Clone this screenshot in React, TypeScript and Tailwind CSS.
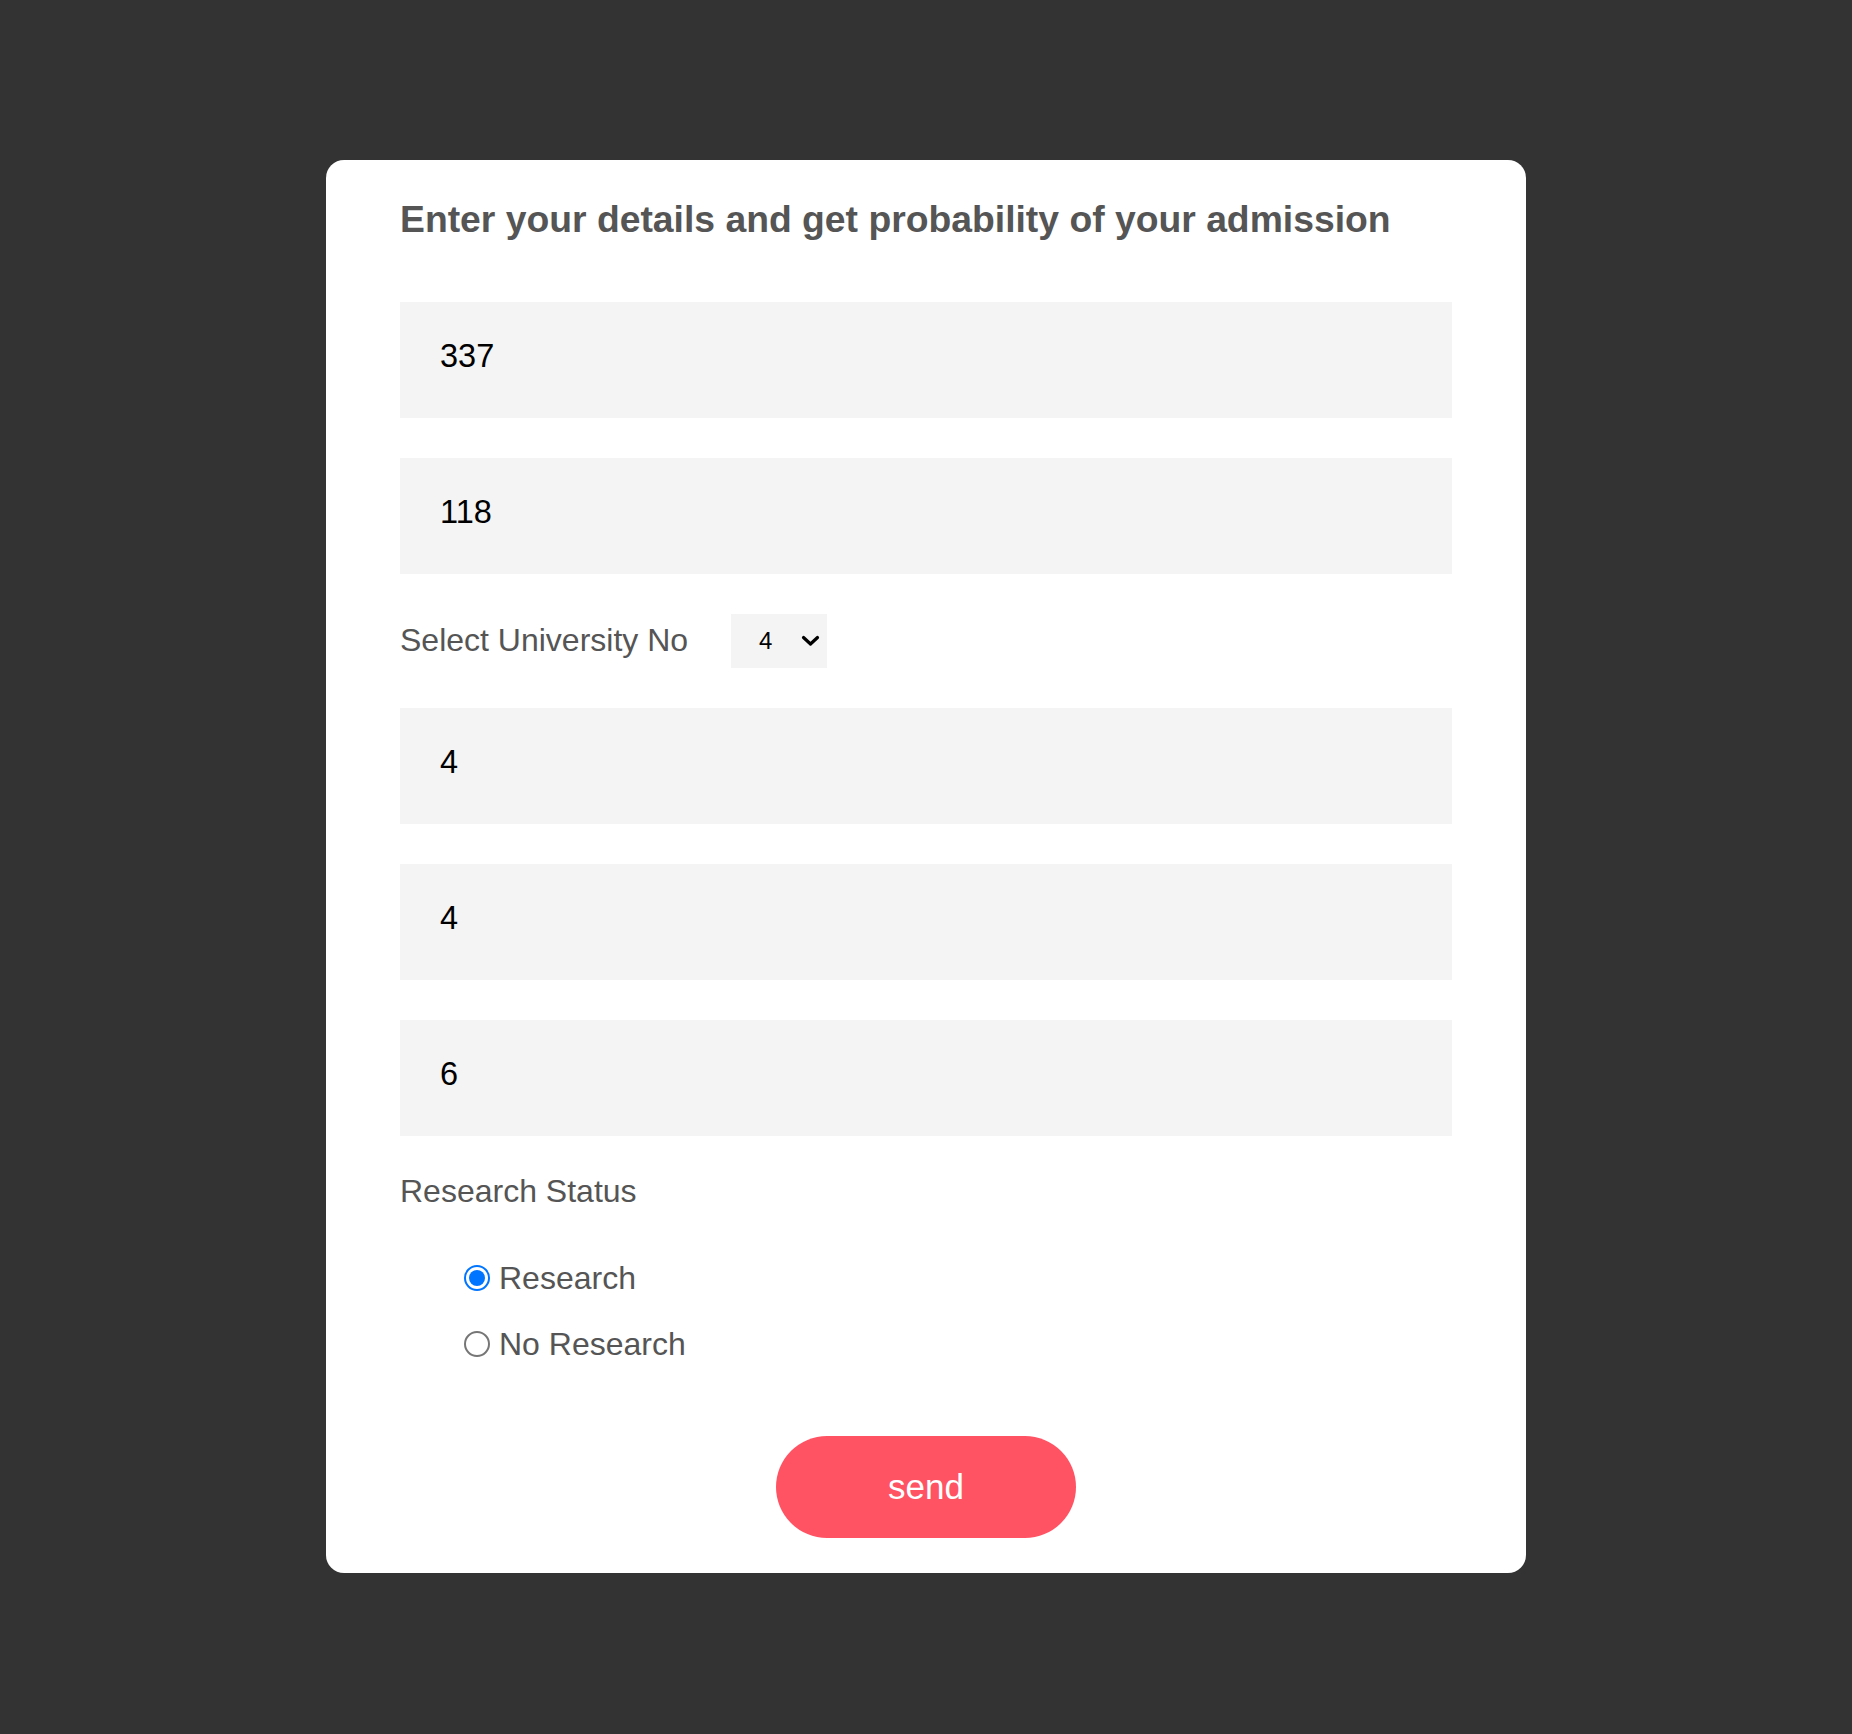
import React, { useState } from "react";

export default function App() {
  const [research, setResearch] = useState(true);
  const font = "font-['Liberation_Sans',Arial,sans-serif]";
  const inputCls =
    "w-full h-[116px] bg-[#f4f4f4] pl-[40px] pb-[7px] text-[32.5px] text-black outline-none border-0 " + font;
  return (
    <div className={"min-h-[1734px] bg-[#333333] pt-[160px] " + font}>
      <div className="w-[1200px] mx-auto bg-white rounded-[18px] px-[74px] pt-[38px] pb-[35px]">
        <h2 className="text-[37.3px] leading-[42px] font-bold text-[#555555] whitespace-nowrap">
          Enter your details and get probability of your admission
        </h2>
        <form className="mt-[62px] flex flex-col" onSubmit={(e) => e.preventDefault()}>
          <div className="flex flex-col gap-[40px]">
            <input className={inputCls} defaultValue="337" />
            <input className={inputCls} defaultValue="118" />
            <div className="flex items-center h-[54px]">
              <span className="text-[32px] leading-[37px] text-[#555555] -mt-[2px]">Select University No</span>
              <div className="relative ml-[43px] w-[96px] h-[54px] bg-[#f4f4f4]">
                <select
                  defaultValue="4"
                  className={"appearance-none w-full h-full bg-transparent pl-[28px] text-[24px] text-black outline-none border-0 " + font}
                >
                  <option value="1">1</option>
                  <option value="2">2</option>
                  <option value="3">3</option>
                  <option value="4">4</option>
                  <option value="5">5</option>
                </select>
                <svg
                  className="absolute left-[70px] top-[21px] pointer-events-none"
                  width="19"
                  height="12"
                  viewBox="0 0 19 12"
                >
                  <path d="M2.5 2.5 L9.5 9 L16.5 2.5" fill="none" stroke="#000" strokeWidth="3.2" strokeLinecap="round" strokeLinejoin="round" />
                </svg>
              </div>
            </div>
            <input className={inputCls} defaultValue="4" />
            <input className={inputCls} defaultValue="4" />
            <input className={inputCls} defaultValue="6" />
          </div>
          <div className="mt-[37px] text-[32px] leading-[37px] text-[#555555]">Research Status</div>
          <div className="mt-[48px] pl-[64px] flex flex-col gap-[26px]">
            <label className="flex items-center h-[40px] cursor-pointer" onClick={() => setResearch(true)}>
              {research ? (
                <span className="w-[26px] h-[26px] rounded-full border-[2px] border-[#0075ff] bg-white flex items-center justify-center">
                  <span className="w-[16px] h-[16px] rounded-full bg-[#0075ff]" />
                </span>
              ) : (
                <span className="w-[26px] h-[26px] rounded-full border-[2px] border-[#767676] bg-white" />
              )}
              <span className="ml-[9px] text-[32px] leading-[37px] text-[#555555]">Research</span>
            </label>
            <label className="flex items-center h-[40px] cursor-pointer" onClick={() => setResearch(false)}>
              {!research ? (
                <span className="w-[26px] h-[26px] rounded-full border-[2px] border-[#0075ff] bg-white flex items-center justify-center">
                  <span className="w-[16px] h-[16px] rounded-full bg-[#0075ff]" />
                </span>
              ) : (
                <span className="w-[26px] h-[26px] rounded-full border-[2px] border-[#767676] bg-white" />
              )}
              <span className="ml-[9px] text-[32px] leading-[37px] text-[#555555]">No Research</span>
            </label>
          </div>
          <button
            type="submit"
            className={"mt-[72px] mx-auto w-[300px] h-[102px] rounded-full bg-[#ff5364] text-white text-[35px] " + font}
          >
            send
          </button>
        </form>
      </div>
    </div>
  );
}
